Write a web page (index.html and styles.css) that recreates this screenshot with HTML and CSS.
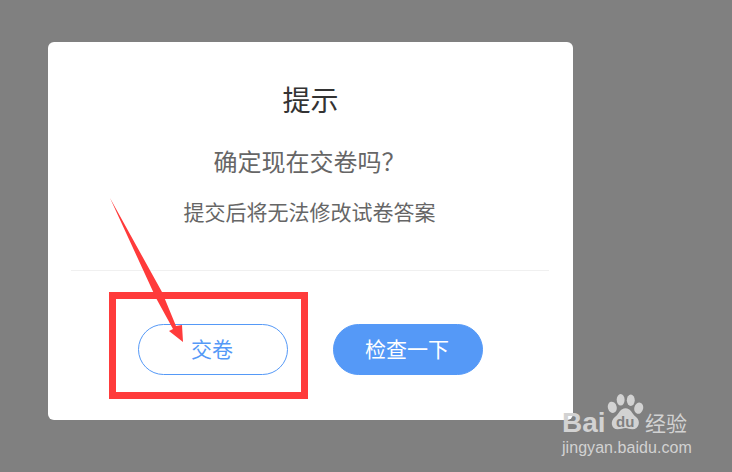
FILE: index.html
```html
<!DOCTYPE html>
<html lang="zh">
<head>
<meta charset="utf-8">
<title>提示</title>
<link rel="stylesheet" href="styles.css">
</head>
<body>
<div class="card">
  <h1 class="title">提示</h1>
  <p class="question">确定现在交卷吗？</p>
  <p class="note">提交后将无法修改试卷答案</p>
  <div class="actions">
    <button class="btn btn-outline">交卷</button>
    <button class="btn btn-solid">检查一下</button>
  </div>
</div>
<div class="highlight"></div>
<svg class="arrow" width="732" height="472" viewBox="0 0 732 472">
  <polygon points="110,198 162,292 176,326 182,325 183,342 169,331 173,329 156,298" fill="#ff3b3b"/>
</svg>
<div class="mark">
  <div class="mark-top">
    <span class="mark-bai">Bai</span>
    <svg class="mark-paw" width="37" height="39" viewBox="0 0 42 44">
      <ellipse cx="6" cy="15" rx="5" ry="6.5" fill="#d2d2d2" transform="rotate(-15 6 15)"/>
      <ellipse cx="15.500" cy="6.500" rx="4.500" ry="6.500" fill="#d2d2d2"/>
      <ellipse cx="27" cy="7" rx="4.500" ry="6.500" fill="#d2d2d2"/>
      <ellipse cx="36" cy="16" rx="5" ry="6.500" fill="#d2d2d2" transform="rotate(15 36 16)"/>
      <path d="M21 16 C27 16 28 22 33 26 C39 31 36 40 29 40 C25 40 24 38.500 21 38.500 C18 38.500 16 40 12 40 C5 40 3 31 9 26 C14 22 15 16 21 16 Z" fill="#d2d2d2"/>
    </svg>
    <span class="mark-du">du</span>
    <span class="mark-cn">经验</span>
  </div>
  <div class="mark-url">jingyan.baidu.com</div>
</div>
</body>
</html>
```
FILE: styles.css
```css
html, body {
  margin: 0;
  padding: 0;
  width: 732px;
  height: 472px;
  overflow: hidden;
  background: #808080;
  font-family: "Liberation Sans", "Noto Sans CJK SC", sans-serif;
}

body {
  padding: 42px 0 0 48px;
  box-sizing: border-box;
}

.card {
  width: 525px;
  height: 378px;
  box-sizing: border-box;
  background: #fff;
  border-radius: 6px;
  padding-top: 40px;
  text-align: center;
}

.title {
  margin: 0;
  font-size: 28px;
  font-weight: 400;
  line-height: 40px;
  color: #333;
}

.question {
  margin: 24px 0 0;
  padding-right: 2px;
  font-size: 24px;
  line-height: 34px;
  color: #666;
}

.note {
  margin: 18px 0 0;
  padding-right: 2px;
  font-size: 21px;
  line-height: 30px;
  color: #666;
}

.actions {
  margin: 42px 24px 0 23px;
  padding-top: 53px;
  border-top: 1px solid #f0f0f0;
  display: flex;
  justify-content: flex-start;
  gap: 45px;
  padding-left: 67px;
}

.btn {
  width: 150px;
  height: 51px;
  box-sizing: border-box;
  border-radius: 26px;
  font-family: inherit;
  font-size: 21px;
  padding: 0 2px 3px 0;
}

.btn-outline {
  background: #fff;
  border: 1px solid #5599f7;
  color: #5599f7;
}

.btn-solid {
  background: #5599f7;
  border: 1px solid #5599f7;
  color: #fff;
}

.highlight {
  position: absolute;
  left: 109px;
  top: 292px;
  width: 199px;
  height: 107px;
  box-sizing: border-box;
  border: 7px solid #ff3b3b;
}

.arrow {
  position: absolute;
  left: 0;
  top: 0;
}

.mark {
  position: absolute;
  left: 562px;
  top: 392px;
  width: 135px;
  color: #d2d2d2;
}

.mark-top {
  position: relative;
  height: 46px;
}

.mark-bai {
  position: absolute;
  left: 0;
  top: 15px;
  font-size: 28px;
  font-weight: 700;
  line-height: 32px;
}

.mark-paw {
  position: absolute;
  left: 45px;
  top: 2px;
}

.mark-du {
  position: absolute;
  left: 54px;
  top: 20px;
  font-size: 15px;
  font-weight: 700;
  line-height: 20px;
  color: #808080;
}

.mark-cn {
  position: absolute;
  left: 83px;
  top: 18px;
  font-size: 21px;
  font-weight: 400;
  line-height: 28px;
}

.mark-url {
  font-size: 16px;
  line-height: 20px;
  letter-spacing: 0.05px;
  white-space: nowrap;
}
```
